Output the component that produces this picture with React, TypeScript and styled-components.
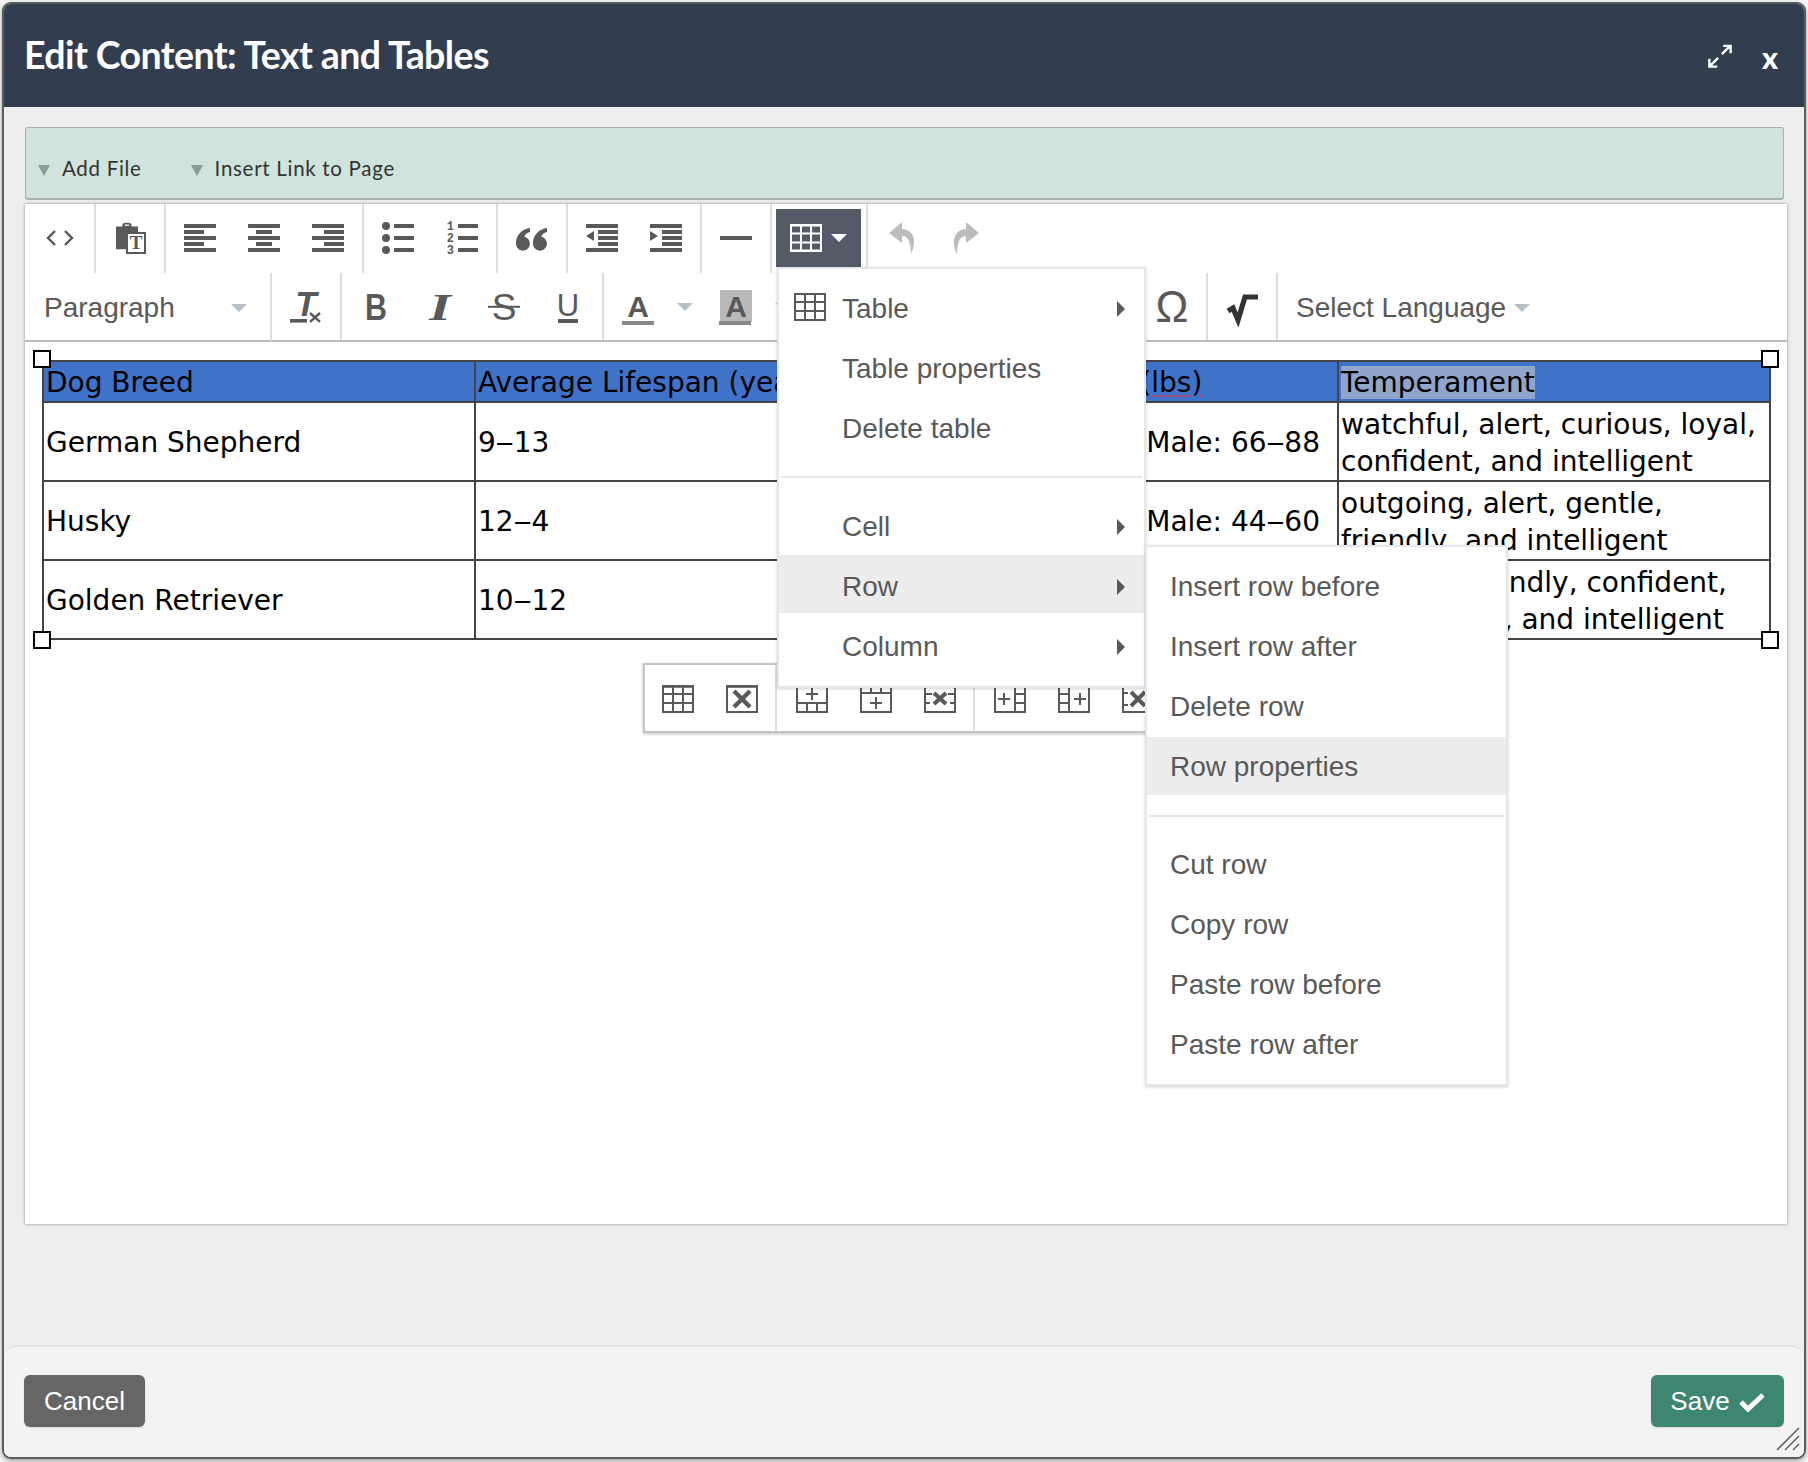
import React from "react";
import styled, { createGlobalStyle } from "styled-components";

const Global = createGlobalStyle`
  html, body { margin: 0; padding: 0; background: #f4f4f4; }
  * { box-sizing: border-box; }
  #root { width: 1808px; height: 1462px; overflow: hidden; }
`;

const Modal = styled.div`
  margin: 2px 0 0 2px; width: 1804px; height: 1457px; display: flex; flex-direction: column;
  border: 2px solid #5b5b5b; border-radius: 9px; background: #eee; overflow: hidden;
  box-shadow: 0 2px 4px rgba(0,0,0,.35); font-family: "Liberation Sans", Arial, sans-serif;
`;
const Header = styled.header`
  height: 103px; flex: none; background: #323d4f; color: #fff; display: flex; align-items: center;
  padding: 0 26px 0 20px;
`;
const Title = styled.h1`
  margin: 0 auto 2px 0; font: 700 37.5px "Lato", sans-serif; letter-spacing: -0.6px;
`;
const Close = styled.span`
  font: 900 30px "Lato", sans-serif; margin: 2px 0 0 30px; line-height: 1;
`;
const Body = styled.main`
  flex: 1; padding: 20px 17px 0 21px; min-height: 0;
`;
const AttachBar = styled.div`
  width: 1759px; height: 73px; background: #d0e3dc; border: 1px solid #a9b0ad; border-bottom-width: 2px;
  border-radius: 3px; display: flex; align-items: flex-end; padding: 0 0 18px 12px; gap: 49px;
`;
const AttachLink = styled.span`
  display: flex; align-items: center; gap: 12px; font: 400 20.5px "Lato", sans-serif; color: #333; letter-spacing: .7px;
`;
const AttachCaret = styled.i`
  width: 0; height: 0; margin-top: 4px; border: 6.5px solid transparent; border-top: 11px solid #8f9a96; border-bottom: 0;
`;
const Panel = styled.section`
  position: relative; margin-top: 4px; width: 1762px; height: 1020px; background: #fff;
  box-shadow: 0 0 3px rgba(0,0,0,.4);
`;
const Row = styled.div<{ $h: number }>`
  height: ${p => p.$h}px; display: flex;
`;
const Row2 = styled(Row)`
  border-bottom: 2px solid #bbb;
`;
const Group = styled.div<{ $open?: boolean }>`
  flex: none; display: flex; padding: 0 2px 0 3px; margin-right: -1px; align-items: flex-start;
  border-right: ${p => p.$open ? "0" : "2px solid #ddd"};
`;
const Group2 = styled(Group)<{ $w?: number }>`
  align-items: center; ${p => p.$w ? `width: ${p.$w}px;` : ""}
`;
const ToolBtn = styled.div`
  flex: none; width: 64px; height: 64px; display: flex; align-items: center; justify-content: center; color: #595959;
  padding-top: 4px;
`;
const ToolBtn2 = styled(ToolBtn)`
  height: 68px; padding-top: 0;
`;
const GlyphBtn = styled(ToolBtn2)`
  margin-left: auto; font-size: 44px;
`;
const ActiveBtn = styled.div`
  width: 85px; height: 58px; margin: 5px 3px 0 2px; background: #545b66; display: flex; align-items: center;
  padding: 0 0 0 14px; gap: 9px; color: #fff;
`;
const Caret = styled.i<{ $c?: string }>`
  flex: none; width: 0; height: 0; border-left: 8px solid transparent; border-right: 8px solid transparent;
  border-top: 8px solid ${p => p.$c || "#b8bfc6"};
`;
const SelectBox = styled.div`
  flex: none; width: 247px; height: 68px; margin-right: -1px; padding: 2px 23px 0 19px; display: flex; align-items: center; justify-content: space-between;
  font-size: 28px; color: #595959; border-right: 2px solid #ddd;
`;
const MenuCaretBtn = styled.div<{ $mr?: number }>`
  flex: none; width: 30px; height: 68px; display: flex; align-items: center; justify-content: center;
  margin-right: ${p => p.$mr || 0}px;
`;
const LangSelect = styled.div`
  display: flex; align-items: center; gap: 8px; padding: 2px 0 0 19px; height: 68px; font-size: 28px; color: #595959;
`;
const Content = styled.div`
  padding: 18px 17px 0 17px; position: relative;
`;
const DocTable = styled.table`
  border-collapse: collapse; table-layout: fixed; width: 1727px; font: 400 28px/37px "DejaVu Sans", sans-serif; color: #000;
`;
const HeadCell = styled.td`
  height: 41px; padding: 1px 2px 0; border: 2px solid #444; background: #3f73ca; white-space: nowrap; overflow: hidden;
`;
const Cell = styled.td<{ $right?: boolean }>`
  height: 79px; padding: 2px 2px 0; border: 2px solid #444; white-space: nowrap; overflow: hidden;
  ${p => p.$right ? "text-align: right; padding-right: 17px;" : ""}
`;
const Marked = styled.span`
  background: #8fa5cc;
`;
const Spell = styled.span`
  text-decoration: underline dotted #e03030 2px; text-underline-offset: 4px;
`;
const Handle = styled.i<{ $x: number; $y: number }>`
  position: absolute; left: ${p => p.$x}px; top: ${p => p.$y}px; width: 18px; height: 18px; background: #fff; border: 2.5px solid #000;
`;
const Menu = styled.div`
  position: absolute; left: 752px; top: 63px; width: 369px; height: 421px; padding-top: 8px; background: #fff;
  border: 2px solid #e6e6ec; z-index: 3; box-shadow: 0 1px 3px rgba(0,0,0,.18);
`;
const SubMenu = styled(Menu)`
  left: 366px; top: 276px; width: 363px; height: 541px; padding-top: 10px; z-index: 4;
`;
const MenuItem = styled.div<{ $hl?: boolean }>`
  height: 58px; margin-bottom: 2px; display: flex; align-items: center; padding: 6px 19px 0 63px; position: relative; font-size: 28px; color: #595959;
  background: ${p => p.$hl ? "#ededed" : "transparent"};
`;
const SubItem = styled(MenuItem)`
  padding: 2px 19px 0 23px;
`;
const MenuIcon = styled.span`
  position: absolute; left: 15px; top: 14px; display: flex;
`;
const Arrow = styled.i`
  margin-left: auto; width: 0; height: 0; border-top: 8px solid transparent; border-bottom: 8px solid transparent; border-left: 8px solid #595959;
`;
const Sep = styled.hr`
  margin: 21px 2px 17px; border: 0; height: 2px; background: #e6e6e6;
`;
const SubSep = styled(Sep)`
  margin: 20px 2px 18px;
`;
const ContextBar = styled.div`
  position: absolute; left: 618px; top: 459px; width: 530px; height: 70px; display: flex; background: #fff; z-index: 2;
  border: 2px solid #c4c4c4; box-shadow: 0 1px 3px rgba(0,0,0,.25);
`;
const CtxGroup = styled.div<{ $first?: boolean; $last?: boolean }>`
  display: flex; flex: none; padding: 0 1px 0 ${p => p.$first ? 1 : 3}px; ${p => p.$last ? "" : "border-right: 2px solid #ddd;"}
`;
const Footer = styled.footer`
  height: 112px; flex: none; background: #f3f3f3; border-top: 2px solid #e2e2e2; border-radius: 12px 12px 0 0;
  display: flex; align-items: flex-start; justify-content: space-between; padding: 28px 20px 0 20px; position: relative;
`;
const Btn = styled.div<{ $bg: string; $w: number }>`
  width: ${p => p.$w}px; height: 52px; background: ${p => p.$bg}; border-radius: 6px; color: #fff; font-size: 26px;
  display: flex; align-items: center; justify-content: center; gap: 9px; box-shadow: 0 1px 2px rgba(0,0,0,.12);
`;
const Grip = styled.span`
  position: absolute; right: 4px; bottom: 6px; display: flex;
`;
const IcSvg = styled.svg`
  overflow: visible; flex: none;
`;

const Ic: React.FC<{ children: React.ReactNode }> = ({ children }) => (
  <IcSvg width={32} height={32} viewBox="0 0 16 16" fill="currentColor">{children}</IcSvg>
);
const Lines: React.FC<{ rows: [number, number][] }> = ({ rows }) => (
  <Ic>{rows.map(([x, w], i) => <rect key={i} x={x} y={1 + i * 3} width={w} height={2} />)}</Ic>
);
const Code = () => <Ic><path d="M5.5 4.5 2 8l3.5 3.5M10.5 4.5 14 8l-3.5 3.5" fill="none" stroke="currentColor" strokeWidth="1.2" /></Ic>;
const Paste = () => (
  <Ic>
    <path d="M1 2.2h3.2V1.6C4.2.8 4.9.4 6 .4h1c1.1 0 1.8.4 1.8 1.2v.6H12V5H6v8.6H1z" />
    <path d="M5.4 1.9h2.2v-.6H5.4z" fill="#fff" />
    <rect x="6.5" y="5.5" width="9" height="10" fill="#fff" stroke="currentColor" />
    <text x="11" y="13.4" textAnchor="middle" fontFamily="'Liberation Serif', serif" fontWeight="700" fontSize="9.5">T</text>
  </Ic>
);
const Bullets = () => (
  <Ic>{[0, 6, 12].map(y => <g key={y}><circle cx="2" cy={2 + y} r="2" /><rect x="6" y={1 + y} width="10" height="2" /></g>)}</Ic>
);
const Numbers = () => (
  <Ic>
    {[1, 2, 3].map((n, i) => <g key={n}>
      <text x="2.2" y={4.2 + i * 6} textAnchor="middle" fontFamily="'Liberation Mono', monospace" fontSize="6" fontWeight="700">{n}</text>
      <rect x="6" y={1 + i * 6} width="10" height="2" />
    </g>)}
  </Ic>
);
const Quote = () => (
  <Ic>
    {[0, 8.5].map(x => <path key={x} transform={`translate(${x} 0)`} d="M0 10.5C0 6.5 3 3.5 7 3v2C5.4 5.4 4.4 6.2 4.2 7.4A3.5 3.5 0 1 1 0 10.5Z" />)}
  </Ic>
);
const Outdent = () => (
  <Ic>
    {[[0, 16], [6, 10], [6, 10], [6, 10], [0, 16]].map(([x, w], i) => <rect key={i} x={x} y={1 + i * 3} width={w} height={2} />)}
    <path d="M4 4.5v5L0 7z" />
  </Ic>
);
const Indent = () => (
  <Ic>
    {[[0, 16], [6, 10], [6, 10], [6, 10], [0, 16]].map(([x, w], i) => <rect key={i} x={x} y={1 + i * 3} width={w} height={2} />)}
    <path d="M0 4.5v5L4 7z" />
  </Ic>
);
const Hr = () => <Ic><rect y="7" width="16" height="2" /></Ic>;
const TableFill = () => (
  <Ic><path fillRule="evenodd" d="M0 1h16v14H0zM1 2.2v3h4v-3zM6 2.2v3h4v-3zM11 2.2v3h4v-3zM1 6.3v3.4h4V6.3zM6 6.3v3.4h4V6.3zM11 6.3v3.4h4V6.3zM1 10.8v3h4v-3zM6 10.8v3h4v-3zM11 10.8v3h4v-3z" /></Ic>
);
const Undo = ({ flip }: { flip?: boolean }) => (
  <Ic><path transform={flip ? "matrix(-1 0 0 1 16 0)" : undefined} d="M8 0 1.5 5.5 8 10.5V7c3 0 4.2 2.5 4.5 9C15 11 15 4 8 3.5z" fill="#bcbcbc" /></Ic>
);
const GridLines = () => (
  <g fill="none" stroke="currentColor">
    <rect x=".5" y="1.5" width="15" height="13" />
    <path d="M0 5.5h16M0 10h16M5.5 1v14M10.5 1v14" />
  </g>
);
const TableLine = () => <Ic><GridLines /></Ic>;
const CtxTable = () => <Ic><GridLines /><rect x="0" y="1" width="16" height="1.4" /></Ic>;
const CtxDelete = () => (
  <Ic>
    <g fill="none" stroke="currentColor"><rect x=".5" y="1.5" width="15" height="13" /></g>
    <rect y="1" width="16" height="1.4" />
    <path d="M4 4l8 8M12 4l-8 8" stroke="currentColor" strokeWidth="2.2" />
  </Ic>
);
const F: React.FC<{ d: string; x?: string }> = ({ d, x }) => (
  <Ic>
    <g fill="none" stroke="currentColor">
      <rect x=".5" y="1.5" width="15" height="13" /><path d={d} />
      {x && <path d={x} strokeWidth="2" />}
    </g>
  </Ic>
);
const RowBefore = () => <Ic><g fill="none" stroke="currentColor"><path d="M.5 1v13.5h15V1M0 10h16M5.5 10v5M10.5 10v5M8 2.5v6M5 5.5h6" /></g></Ic>;
const RowAfter = () => <Ic><g fill="none" stroke="currentColor"><path d="M.5 1v13.5h15V1M0 5h16M5.5 1v4M10.5 1v4M8 7v6M5 10h6" /></g></Ic>;
const RowDelete = () => <Ic><g fill="none" stroke="currentColor"><path d="M.5 1v13.5h15V1M0 5.5h4M12 5.5h4M0 10h3M13 10h3" /><path d="M5 5l6 5.5M11 5l-6 5.5" strokeWidth="2" /></g></Ic>;
const ColBefore = () => <F d="M10.5 1v14M10.5 5.5h5M10.5 10h5M5 5v6M2 8h6" />;
const ColAfter = () => <F d="M5.5 1v14M0 5.5h5M0 10h5M11 5v6M8 8h6" />;
const ColDelete = () => <F d="M0 5h3M13 5h3M0 11h3M13 11h3" x="M4.5 4.5l7 7M11.5 4.5l-7 7" />;

const Clear = () => (
  <Ic>
    <text x="8" y="12.6" textAnchor="middle" fontFamily="'Liberation Sans', sans-serif" fontStyle="italic" fontWeight="700" fontSize="17.5">T</text>
    <rect x="0" y="14" width="8.5" height="1.8" />
    <path d="M10 11l5 4.4M15 11l-5 4.4" stroke="currentColor" strokeWidth="1.2" />
  </Ic>
);
const Letter: React.FC<{ c: string; w?: number; st?: string; fam?: string; fs?: number; len?: number; y?: number }> = ({ c, w = 400, st = "normal", fam = "Liberation Sans", fs = 18.5, len, y = 14.6 }) => (
  <text x="8" y={y} textAnchor="middle" fontFamily={`'${fam}', sans-serif`} fontWeight={w} fontStyle={st} fontSize={fs}
    textLength={len} lengthAdjust={len ? "spacingAndGlyphs" : undefined}>{c}</text>
);
const Bold = () => <Ic><Letter c="B" w={700} len={11} /></Ic>;
const Italic = () => <Ic><Letter c="I" st="italic" fam="Liberation Serif" fs={19} len={11} w={700} /></Ic>;
const Strike = () => <Ic><Letter c="S" /><rect y="7.4" width="16" height="1" /></Ic>;
const Under = () => <Ic><Letter c="U" fs={15.5} y={12.4} /><rect x="3" y="14" width="10" height="2" /></Ic>;
const ColorA = ({ bg }: { bg?: boolean }) => (
  <Ic>
    {bg && <rect y="-.5" width="16" height="16" fill="#b9b9b9" />}
    <Letter c="A" w={700} fs={15} y={13} />
    <rect x={bg ? -.5 : 0} y="15" width="16" height="2" fill="#888" />
  </Ic>
);
const Sqrt = () => (
  <Ic><path d="M1 10l2.5-1.5L6 14.5 9.5 3H16" fill="none" stroke="#333" strokeWidth="2.6" /></Ic>
);
const Check = () => (
  <svg width="26" height="26" viewBox="0 0 26 26"><path d="M2 14l7 7L24 7" fill="none" stroke="#fff" strokeWidth="5" /></svg>
);

const App: React.FC = () => (
  <>
    <Global />
    <Modal>
      <Header>
        <Title>Edit Content: Text and Tables</Title>
        <svg width="24" height="24" viewBox="0 0 26 26" fill="none" stroke="#fff" strokeWidth="2.6">
          <path d="M15 11l8.5-8.5M16.5 2H24.5v8M11 15l-8.5 8.5M1.5 16v8.5H10" />
        </svg>
        <Close>x</Close>
      </Header>
      <Body>
        <AttachBar>
          <AttachLink><AttachCaret />Add File</AttachLink>
          <AttachLink><AttachCaret />Insert Link to Page</AttachLink>
        </AttachBar>
        <Panel>
          <Row $h={69}>
            <Group><ToolBtn><Code /></ToolBtn></Group>
            <Group><ToolBtn><Paste /></ToolBtn></Group>
            <Group>
              <ToolBtn><Lines rows={[[0, 16], [0, 10], [0, 16], [0, 10], [0, 16]]} /></ToolBtn>
              <ToolBtn><Lines rows={[[0, 16], [4, 8], [0, 16], [4, 8], [0, 16]]} /></ToolBtn>
              <ToolBtn><Lines rows={[[0, 16], [6, 10], [0, 16], [6, 10], [0, 16]]} /></ToolBtn>
            </Group>
            <Group><ToolBtn><Bullets /></ToolBtn><ToolBtn><Numbers /></ToolBtn></Group>
            <Group><ToolBtn><Quote /></ToolBtn></Group>
            <Group><ToolBtn><Outdent /></ToolBtn><ToolBtn><Indent /></ToolBtn></Group>
            <Group><ToolBtn><Hr /></ToolBtn></Group>
            <Group><ActiveBtn><TableFill /><Caret $c="#fff" /></ActiveBtn></Group>
            <Group $open><ToolBtn><Undo /></ToolBtn><ToolBtn><Undo flip /></ToolBtn></Group>
          </Row>
          <Row2 $h={69}>
            <SelectBox>Paragraph<Caret /></SelectBox>
            <Group2><ToolBtn2><Clear /></ToolBtn2></Group2>
            <Group2>
              <ToolBtn2><Bold /></ToolBtn2><ToolBtn2><Italic /></ToolBtn2><ToolBtn2><Strike /></ToolBtn2><ToolBtn2><Under /></ToolBtn2>
            </Group2>
            <Group2 $w={605}>
              <ToolBtn2><ColorA /></ToolBtn2>
              <MenuCaretBtn $mr={4}><Caret /></MenuCaretBtn>
              <ToolBtn2><ColorA bg /></ToolBtn2>
              <MenuCaretBtn><Caret /></MenuCaretBtn>
              <GlyphBtn>Ω</GlyphBtn>
            </Group2>
            <Group2><ToolBtn2><Sqrt /></ToolBtn2></Group2>
            <LangSelect>Select Language<Caret /></LangSelect>
          </Row2>
          <Content>
            <DocTable>
              <colgroup>
                <col style={{ width: 432 }} />
                <col style={{ width: 432 }} />
                <col style={{ width: 431 }} />
                <col style={{ width: 432 }} />
              </colgroup>
              <tbody>
                <tr>
                  <HeadCell>Dog Breed</HeadCell>
                  <HeadCell>Average Lifespan (years)</HeadCell>
                  <HeadCell>Average Weight <Spell>(lbs)</Spell></HeadCell>
                  <HeadCell><Marked>Temperament</Marked></HeadCell>
                </tr>
                <tr>
                  <Cell>German Shepherd</Cell><Cell>9‒13</Cell><Cell $right>Male: 66‒88</Cell>
                  <Cell>watchful, alert, curious, loyal,<br />confident, and intelligent</Cell>
                </tr>
                <tr>
                  <Cell>Husky</Cell><Cell>12‒4</Cell><Cell $right>Male: 44‒60</Cell>
                  <Cell>outgoing, alert, gentle,<br />friendly, and intelligent</Cell>
                </tr>
                <tr>
                  <Cell>Golden Retriever</Cell><Cell>10‒12</Cell><Cell $right>Male: 65‒75</Cell>
                  <Cell>reliable, friendly, confident,<br />trustworthy, and intelligent</Cell>
                </tr>
              </tbody>
            </DocTable>
            <Handle $x={8} $y={8} />
            <Handle $x={1736} $y={8} />
            <Handle $x={8} $y={289} />
            <Handle $x={1736} $y={289} />
          </Content>
          <ContextBar>
            <CtxGroup $first><ToolBtn><CtxTable /></ToolBtn><ToolBtn><CtxDelete /></ToolBtn></CtxGroup>
            <CtxGroup><ToolBtn><RowBefore /></ToolBtn><ToolBtn><RowAfter /></ToolBtn><ToolBtn><RowDelete /></ToolBtn></CtxGroup>
            <CtxGroup $last><ToolBtn><ColBefore /></ToolBtn><ToolBtn><ColAfter /></ToolBtn><ToolBtn><ColDelete /></ToolBtn></CtxGroup>
          </ContextBar>
          <Menu>
            <MenuItem><MenuIcon><TableLine /></MenuIcon>Table<Arrow /></MenuItem>
            <MenuItem>Table properties</MenuItem>
            <MenuItem>Delete table</MenuItem>
            <Sep />
            <MenuItem>Cell<Arrow /></MenuItem>
            <MenuItem $hl>Row<Arrow /></MenuItem>
            <MenuItem>Column<Arrow /></MenuItem>
            <SubMenu>
              <SubItem>Insert row before</SubItem>
              <SubItem>Insert row after</SubItem>
              <SubItem>Delete row</SubItem>
              <SubItem $hl>Row properties</SubItem>
              <SubSep />
              <SubItem>Cut row</SubItem>
              <SubItem>Copy row</SubItem>
              <SubItem>Paste row before</SubItem>
              <SubItem>Paste row after</SubItem>
            </SubMenu>
          </Menu>
        </Panel>
      </Body>
      <Footer>
        <Btn $bg="#666" $w={121}>Cancel</Btn>
        <Btn $bg="#3e8672" $w={133}>Save<Check /></Btn>
        <Grip>
          <svg width="24" height="24" viewBox="0 0 24 24" stroke="#666" strokeWidth="1.6">
            <path d="M1 23 23 1M9 23 23 9M17 23l6-6" />
          </svg>
        </Grip>
      </Footer>
    </Modal>
  </>
);

export default App;
